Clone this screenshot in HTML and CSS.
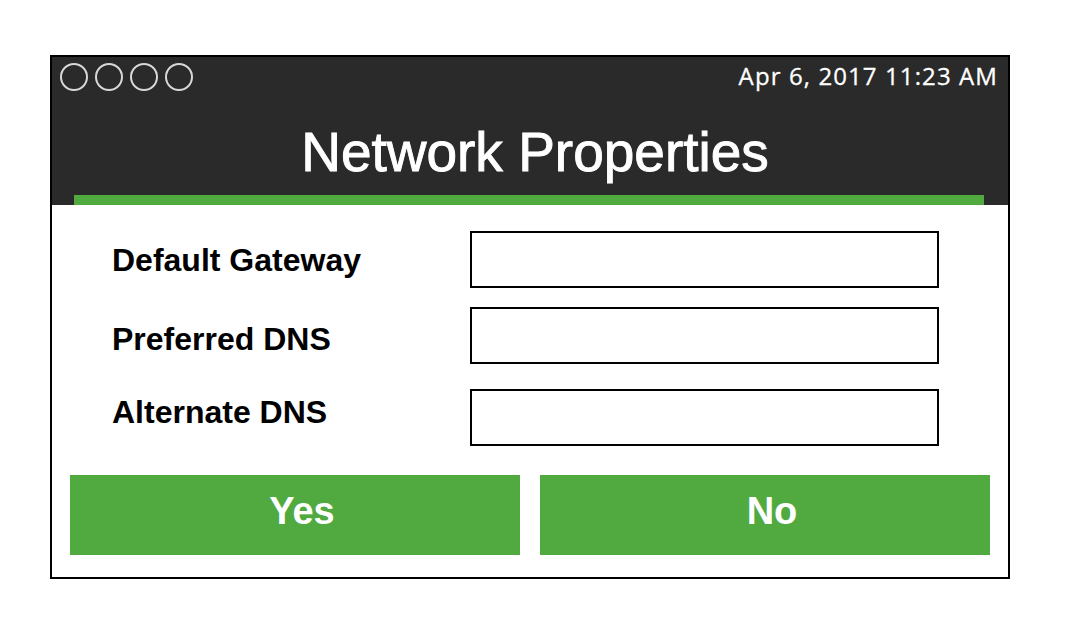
FILE: index.html
```html
<!DOCTYPE html>
<html lang="en">
<head>
<meta charset="utf-8">
<title>Network Properties</title>
<link rel="stylesheet" href="styles.css">
</head>
<body>
<div class="frame">
  <div class="header">
    <div class="topbar">
      <div class="dots">
        <span class="dot"></span><span class="dot"></span><span class="dot"></span><span class="dot"></span>
      </div>
      <div class="clock">Apr 6, 2017 11:23 AM</div>
    </div>
    <h1 class="title">Network Properties</h1>
    <div class="accent"></div>
  </div>
  <div class="body">
    <div class="form">
      <div class="row row-1">
        <label class="label">Default Gateway</label>
        <div class="field"></div>
      </div>
      <div class="row row-2">
        <label class="label label-low">Preferred DNS</label>
        <div class="field"></div>
      </div>
      <div class="row row-3">
        <label class="label label-high">Alternate DNS</label>
        <div class="field"></div>
      </div>
    </div>
    <div class="actions">
      <button class="btn">Yes</button>
      <button class="btn">No</button>
    </div>
  </div>
</div>
</body>
</html>
```

FILE: styles.css
```css
* { box-sizing: border-box; }

html, body {
  margin: 0;
  padding: 0;
  background: #ffffff;
}

body {
  padding: 55px 0 0 50px;
  font-family: "Liberation Sans", Arial, Helvetica, sans-serif;
}

.frame {
  width: 960px;
  height: 524px;
  border: 2px solid #000;
  display: flex;
  flex-direction: column;
  background: #fff;
}

.header {
  height: 149px;
  background: #2a2a2a;
  display: flex;
  flex-direction: column;
}

.topbar {
  display: flex;
  justify-content: space-between;
  align-items: flex-start;
  padding: 6px 10px 0 8px;
}

.dots {
  display: flex;
  gap: 7px;
}

.dot {
  width: 28px;
  height: 28px;
  border: 2px solid #d8d8d8;
  border-radius: 50%;
}

.clock {
  font-family: "Open Sans", "Noto Sans", sans-serif;
  font-size: 24px;
  line-height: 28px;
  font-weight: 500;
  letter-spacing: 1.1px;
  color: #fff;
  -webkit-text-stroke: 0.3px #fff;
  margin-top: -1px;
}

.title {
  margin: 34px 0 0 0;
  padding-left: 10px;
  font-size: 55px;
  line-height: 54px;
  font-weight: 400;
  color: #fff;
  -webkit-text-stroke: 0.9px #fff;
  text-align: center;
}

.accent {
  margin: auto 24px 0 22px;
  height: 10px;
  background: #51aa3f;
}

.body {
  flex: 1;
  display: flex;
  flex-direction: column;
  padding: 26px 18px 22px 18px;
}

.form {
  display: flex;
  flex-direction: column;
  padding: 0 51px 0 42px;
}

.row {
  display: flex;
  align-items: center;
}

.row-2 { margin-top: 19px; }
.row-3 { margin-top: 25px; }

.label {
  width: 358px;
  font-size: 32px;
  line-height: 32px;
  font-weight: 700;
  color: #000;
}

.label-low { padding-top: 7px; }
.label-high { padding-bottom: 12px; }

.field {
  width: 469px;
  height: 57px;
  border: 2px solid #000;
  background: #fff;
}

.actions {
  margin-top: 29px;
  display: flex;
  gap: 20px;
}

.btn {
  flex: 1;
  height: 80px;
  border: none;
  background: #51aa3f;
  color: #fff;
  font-family: "Liberation Sans", Arial, Helvetica, sans-serif;
  font-size: 38px;
  font-weight: 700;
  padding: 0 0 7px 14px;
  cursor: pointer;
}
```
